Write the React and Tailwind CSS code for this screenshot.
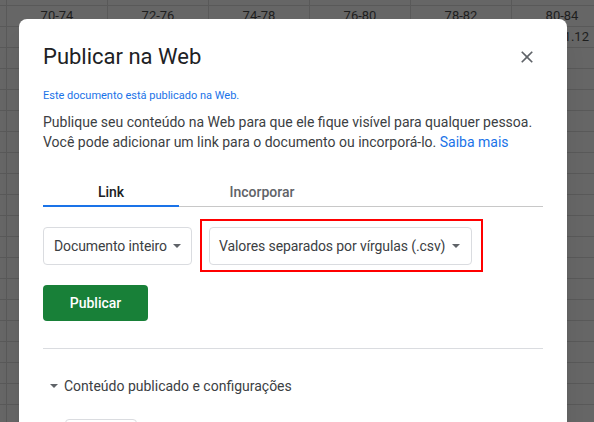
import React from 'react';

const headers = ['70-74', '72-76', '74-78', '76-80', '78-82', '80-84'];

const Caret = ({ className }) => (
  <svg className={className} width="8" height="4" viewBox="0 0 8 4">
    <path d="M0 0h8L4 4z" fill="currentColor" />
  </svg>
);

const Sheet = () => {
  const rows = Array.from({ length: 21 });
  return (
    <div className="-mt-[15px] text-[13px] text-[#1e1e1e]">
      {rows.map((_, r) => (
        <div key={r} className="flex h-[21px] border-b border-[#595959]">
          <div className="w-[7px] shrink-0 border-r border-[#595959]" />
          {headers.map((h, c) => (
            <div
              key={c}
              className={`w-[101px] shrink-0 border-r border-[#595959] flex items-end pb-[1px] ${
                r === 2 && c === 5 ? 'justify-end pr-[23px]' : 'justify-center'
              }`}
            >
              {r === 1 && h}
              {r === 2 && c === 5 && '1.12'}
            </div>
          ))}
        </div>
      ))}
    </div>
  );
};

const Dropdown = ({ label, className }) => (
  <div
    className={`h-[38px] flex items-center justify-between whitespace-nowrap border border-[#dadce0] rounded-[4px] bg-white text-[14px] tracking-[-0.1px] text-[#3c4043] ${className}`}
  >
    <span>{label}</span>
    <Caret className="shrink-0 text-[#5f6368]" />
  </div>
);

export default function App() {
  return (
    <div
      className="relative w-[594px] h-[422px] overflow-hidden bg-[#666666]"
      style={{ fontFamily: 'Roboto, "Liberation Sans", sans-serif' }}
    >
      <Sheet />

      <div className="absolute left-[19px] top-[19px] w-[548px] h-[440px] bg-white rounded-[8px] shadow-xl px-6 pt-6">
        <div className="flex items-center justify-between h-[28px]">
          <h1 className="text-[22px] leading-[28px] text-[#202124]">Publicar na Web</h1>
          <svg className="mr-[6px] text-[#5f6368]" width="20" height="20" viewBox="0 0 24 24">
            <path
              fill="currentColor"
              d="M19 6.41L17.59 5 12 10.59 6.41 5 5 6.41 10.59 12 5 17.59 6.41 19 12 13.41 17.59 19 19 17.59 13.41 12z"
            />
          </svg>
        </div>

        <p className="mt-[17px] text-[11px] leading-4 text-[#1a73e8]">
          Este documento está publicado na Web.
        </p>

        <p className="mt-2 text-[14px] leading-5 text-[#3c4043]">
          Publique seu conteúdo na Web para que ele fique visível para qualquer pessoa.
          <br />
          Você pode adicionar um link para o documento ou incorporá-lo.{' '}
          <span className="text-[#1a73e8]">Saiba mais</span>
        </p>

        <div className="mt-[30px] flex border-b border-[#c8c8c8] text-[14px] leading-5 font-medium">
          <div className="w-[136px] text-center pb-[3px] border-b-2 border-[#1a73e8] -mb-px text-[#202124]">
            Link
          </div>
          <div className="w-[166px] text-center pb-[3px] text-[#5f6368]">Incorporar</div>
        </div>

        <div className="mt-5 flex items-center gap-[17px]">
          <Dropdown label="Documento inteiro" className="w-[149px] pl-[10px] pr-[10px]" />
          <div className="relative">
            <Dropdown label="Valores separados por vírgulas (.csv)" className="w-[263px] pl-[9px] pr-[11px]" />
            <div className="absolute -left-[9px] -right-[11px] -top-[8px] -bottom-[7px] border-2 border-[#ff0000]" />
          </div>
        </div>

        <button className="mt-5 w-[105px] h-[36px] rounded-[4px] bg-[#188038] text-white text-[14px] font-medium">
          Publicar
        </button>

        <div className="mt-[27px] h-px bg-[#dadce0]" />

        <div className="mt-[27px] flex items-center text-[14px] leading-5 text-[#3c4043]">
          <Caret className="ml-[7px] mr-[6px] text-[#5f6368]" />
          <span>Conteúdo publicado e configurações</span>
        </div>

        <div className="mt-[23px] ml-[22px] w-[72px] h-[36px] border border-[#dadce0] rounded-[4px]" />
      </div>
    </div>
  );
}
